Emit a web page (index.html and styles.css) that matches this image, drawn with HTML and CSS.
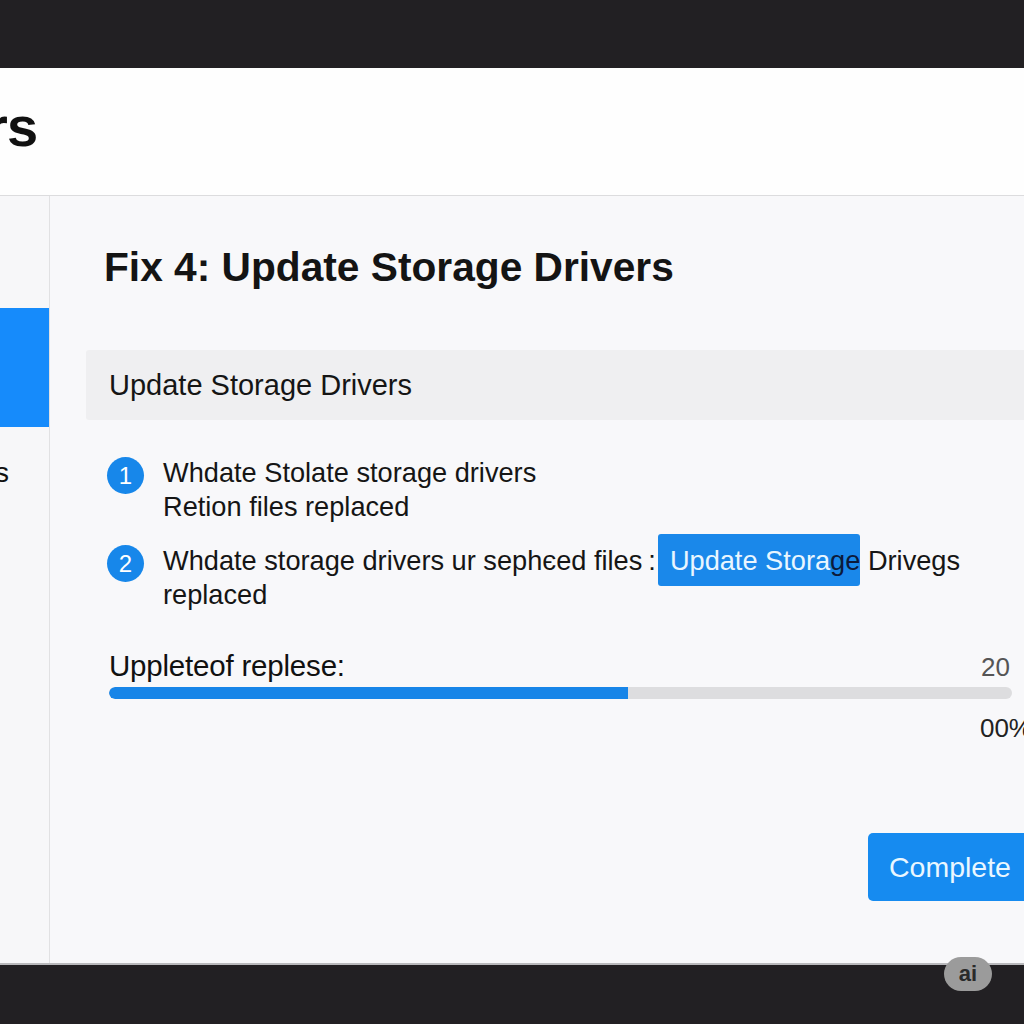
FILE: index.html
```html
<!DOCTYPE html>
<html>
<head>
<meta charset="utf-8">
<link rel="stylesheet" href="styles.css">
</head>
<body>
<div class="topbar"></div>
<div class="window">
  <header class="win-header">
    <div class="win-title">Drivers</div>
  </header>
  <div class="win-body">
    <aside class="sidebar">
      <div class="side-gap"></div>
      <div class="side-active"></div>
      <div class="side-item">Fixes</div>
    </aside>
    <main class="main">
      <h1 class="fix-title">Fix 4: Update Storage Drivers</h1>
      <div class="band">Update Storage Drivers</div>
      <ol class="steps">
        <li class="step">
          <span class="num">1</span>
          <div class="step-text">Whdate Stolate storage drivers<br>Retion files replaced</div>
        </li>
        <li class="step">
          <span class="num">2</span>
          <div class="step-text">Whdate storage drivers ur sephєed files<span class="colon">:</span><span class="hl">Update Stora<span class="hl-dark">ge</span></span> Drivegs<br>replaced</div>
        </li>
      </ol>
      <div class="progress">
        <div class="progress-head">
          <span class="progress-label">Uppleteof replese:</span>
          <span class="progress-num">20</span>
        </div>
        <div class="track"><div class="fill" style="width:57.5%"></div></div>
        <div class="progress-pct">00%</div>
      </div>
      <div class="actions">
        <button class="btn">Complete</button>
      </div>
    </main>
  </div>
</div>
<div class="bottombar">
  <span class="ai-badge">ai</span>
</div>
</body>
</html>
```
FILE: styles.css
```css
html, body {
  margin: 0;
  padding: 0;
}
body {
  width: 1024px;
  height: 1024px;
  overflow: hidden;
  background: #222023;
  font-family: "Liberation Sans", Arial, sans-serif;
  color: #111;
}
.topbar {
  height: 68px;
  background: #222023;
}
.window {
  height: 895px;
  background: #f8f8fa;
  border-bottom: 2px solid #b9b9bc;
  display: flex;
  flex-direction: column;
  overflow: hidden;
}
.win-header {
  height: 127px;
  flex: none;
  background: #fefefe;
  border-bottom: 1px solid #dcdcde;
  display: flex;
  align-items: center;
  overflow: hidden;
}
.win-title {
  font-size: 56px;
  font-weight: 700;
  letter-spacing: -1px;
  margin-left: -149px;
  margin-top: -10px;
  white-space: nowrap;
}
.win-body {
  flex: 1;
  display: flex;
  min-height: 0;
}
.sidebar {
  width: 49px;
  flex: none;
  background: #f7f7f9;
  border-right: 1px solid #e1e1e3;
  display: flex;
  flex-direction: column;
  overflow: hidden;
}
.side-gap {
  height: 112px;
}
.side-active {
  height: 119px;
  background: #168bfb;
}
.side-item {
  margin-top: 30px;
  font-size: 28px;
  white-space: nowrap;
  margin-left: -58px;
}
.main {
  flex: none;
  width: 1010px;
  padding-left: 54px;
  box-sizing: border-box;
  display: flex;
  flex-direction: column;
}
.fix-title {
  margin: 47px 0 0 0;
  font-size: 40.7px;
  font-weight: 700;
  line-height: 48px;
  color: #141414;
}
.band {
  margin: 59px -60px 0 -18px;
  height: 70px;
  background: #efeff1;
  border-radius: 3px;
  display: flex;
  align-items: center;
  padding-left: 23px;
  font-size: 29px;
  color: #151515;
}
.steps {
  list-style: none;
  margin: 36px 0 0 0;
  padding: 0;
  display: flex;
  flex-direction: column;
  gap: 20px;
}
.step {
  display: flex;
  align-items: flex-start;
  gap: 19px;
}
.num {
  flex: none;
  width: 37px;
  height: 37px;
  margin-left: 3px;
  border-radius: 50%;
  background: #1787ea;
  color: #fff;
  font-size: 24px;
  display: flex;
  align-items: center;
  justify-content: center;
  margin-top: 1px;
}
.step-text {
  font-size: 27.2px;
  line-height: 34px;
  color: #151515;
  white-space: nowrap;
}
.colon {
  margin-left: 6px;
  margin-right: 2px;
}
.hl {
  background: #1a88ea;
  color: #e9f6ff;
  border-radius: 3px;
  padding: 11px 0 10px 12px;
}
.hl-dark {
  color: #0c1a3a;
}
.progress {
  margin-top: 37px;
  width: 903px;
  margin-left: 5px;
}
.progress-head {
  display: flex;
  justify-content: space-between;
  align-items: baseline;
  font-size: 29.5px;
  line-height: 34px;
}
.progress-label {
  color: #111;
  letter-spacing: -0.2px;
}
.progress-num {
  color: #555;
  font-size: 26px;
  margin-right: 2px;
}
.track {
  margin-top: 3px;
  height: 12px;
  background: #dddddf;
  border-radius: 6px;
  overflow: hidden;
}
.fill {
  height: 100%;
  background: #1785e8;
  border-radius: 6px 0 0 6px;
}
.progress-pct {
  text-align: right;
  font-size: 26px;
  color: #222;
  margin-top: 14px;
  margin-right: -20px;
}
.actions {
  margin-top: 89px;
  display: flex;
  justify-content: flex-end;
}
.btn {
  font-family: "Liberation Sans", Arial, sans-serif;
  font-size: 28.5px;
  color: #eaf7ff;
  background: #168bf0;
  border: none;
  border-radius: 5px;
  height: 68px;
  width: 182px;
  text-align: left;
  padding: 0 0 0 21px;
  margin-right: 10px;
}
.bottombar {
  height: 57px;
  background: #222023;
  position: relative;
}
.ai-badge {
  position: absolute;
  left: 944px;
  top: -8px;
  width: 48px;
  height: 34px;
  border-radius: 17px;
  background: #9b9b9b;
  color: #2a2a2a;
  font-size: 22px;
  font-weight: 700;
  display: flex;
  align-items: center;
  justify-content: center;
}
```
